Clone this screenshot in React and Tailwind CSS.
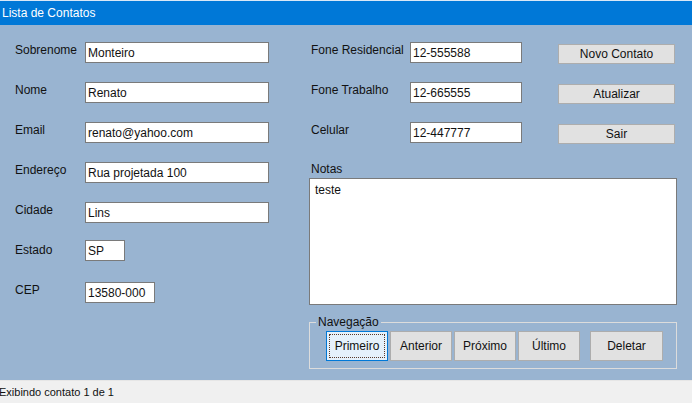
import React from 'react';

const Campo = ({ label, value, width = 'w-[184px]', extra = '' }) => (
  <div className="flex h-[21px]">
    <span className="w-[70px] leading-[14px] pt-[1px]">{label}</span>
    <div className={`${width} ${extra} h-[21px] bg-white border border-[#7a7a7a] pl-[2px] flex items-center leading-[14px]`}>
      {value}
    </div>
  </div>
);

const Fone = ({ label, value, botao }) => (
  <div className="flex h-[21px]">
    <span className="w-[101px] pl-[2px] leading-[14px] pt-[1px]">{label}</span>
    <div className="w-[112px] h-[21px] bg-white border border-[#7a7a7a] pl-[2px] flex items-center leading-[14px]">
      {value}
    </div>
    <button className="ml-[36px] mt-[2px] w-[117px] h-[20px] bg-[#e1e1e1] border border-[#adadad] leading-[14px]">
      {botao}
    </button>
  </div>
);

const NavBotao = ({ children, foco, className = 'w-[62px]' }) => (
  <button
    className={
      className +
      ' h-[30px] leading-[14px] ' +
      (foco
        ? 'bg-[#e5f1fb] border border-[#0078d7] outline-1 outline-dotted outline-[#5a3a2a] outline-offset-[-4px]'
        : 'bg-[#e1e1e1] border border-[#adadad]')
    }
  >
    {children}
  </button>
);

export default function App() {
  return (
    <div className="w-[692px] h-[403px] flex flex-col overflow-hidden font-['Liberation_Sans',Arial,sans-serif] text-[12px] text-[#111]">
      {/* barra de titulo */}
      <div className="h-[25px] bg-[#0078d7] border-t border-[#d9e8f7] flex items-center pl-[2px] text-white">
        Lista de Contatos
      </div>

      <div className="h-[355px] bg-[#99b4d1] flex pt-[17px]">
        <div className="w-[309px] pl-[15px] flex flex-col gap-[19px]">
          <Campo label="Sobrenome" value="Monteiro" />
          <Campo label="Nome" value="Renato" />
          <Campo label="Email" value="renato@yahoo.com" />
          <Campo label="Endereço" value="Rua projetada 100" />
          <Campo label="Cidade" value="Lins" />
          <Campo label="Estado" value="SP" width="w-[40px]" extra="-mt-[2px]" />
          <Campo label="CEP" value="13580-000" width="w-[70px]" />
        </div>

        <div className="w-[368px] flex flex-col">
          <div className="flex flex-col gap-[19px]">
            <Fone label="Fone Residencial" value="12-555588" botao="Novo Contato" />
            <Fone label="Fone Trabalho" value="12-665555" botao="Atualizar" />
            <Fone label="Celular" value="12-447777" botao="Sair" />
          </div>

          <span className="mt-[19px] pl-[2px] leading-[14px]">Notas</span>
          <div className="mt-[2px] h-[127px] bg-white border border-[#7a7a7a] pl-[5px] pt-[4px] leading-[14px]">
            teste
          </div>

          <fieldset className="mt-[10px] h-[54px] border border-[#dcdcdc]">
            <legend className="ml-[6px] px-[2px] leading-[14px]">Navegação</legend>
            <div className="flex pl-[16px] mt-[2px] gap-[2px]">
              <NavBotao foco>Primeiro</NavBotao>
              <NavBotao>Anterior</NavBotao>
              <NavBotao>Próximo</NavBotao>
              <NavBotao>Último</NavBotao>
              <NavBotao className="w-[73px] ml-[8px]">Deletar</NavBotao>
            </div>
          </fieldset>
        </div>
      </div>

      {/* barra de status */}
      <div className="h-[23px] bg-[#f0f0f0] border-t border-[#e6e6e6] flex items-center -ml-[1px] text-[11px]">
        Exibindo contato 1 de 1
      </div>
    </div>
  );
}
